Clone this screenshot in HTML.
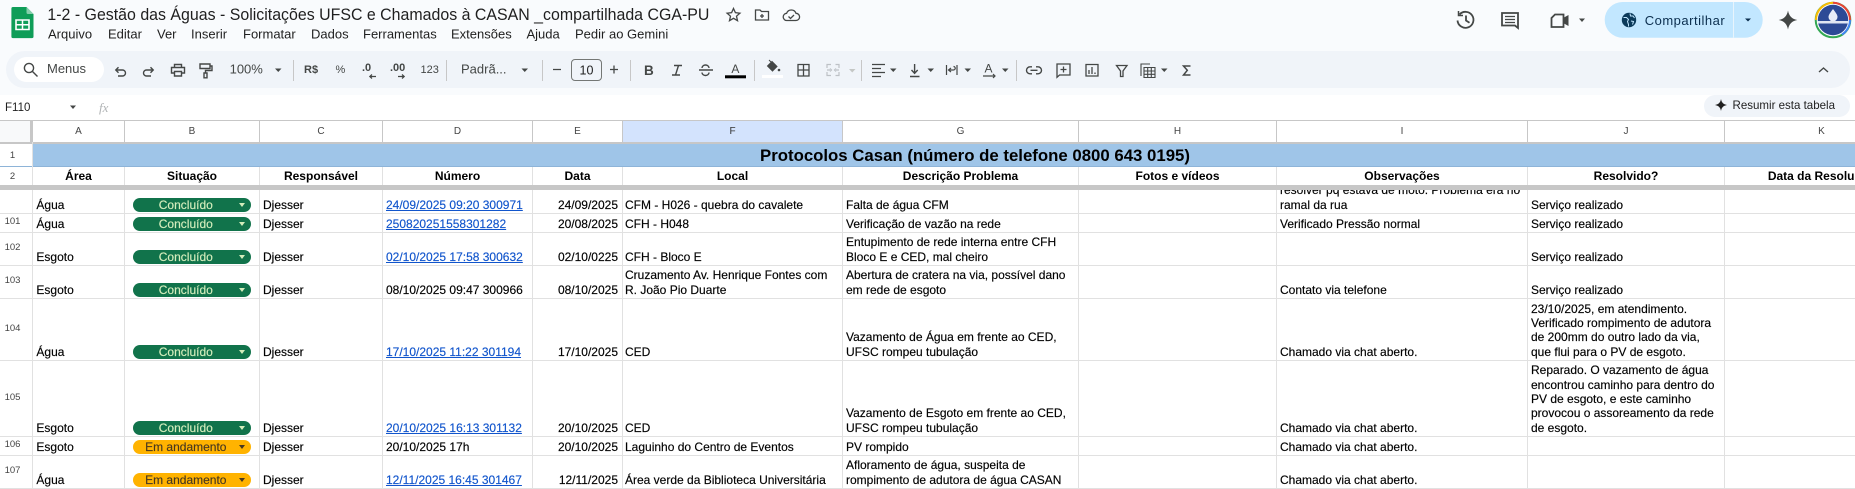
<!DOCTYPE html>
<html lang="pt-BR">
<head>
<meta charset="utf-8">
<title>1-2 - Gestão das Águas</title>
<style>
html,body{margin:0;padding:0;width:1855px;height:489px;overflow:hidden;background:#fff;font-family:"Liberation Sans",Arial,sans-serif;color:#000}
#top{position:absolute;left:0;top:0;width:1855px;height:95px;background:#f9fbfd}
#tb{position:absolute;left:6px;top:51px;width:1844px;height:37px;background:#f0f4f9;border-radius:18.5px}
#sv{position:absolute;left:0;top:0;z-index:5}
.abs{position:absolute}
.cl{position:absolute;top:120px;height:22px;width:1px;background:#c7c7c7}
.gl{position:absolute;top:142px;height:347px;width:1px;background:#e1e1e1}
.hl{position:absolute;left:0;width:1855px;height:1px;background:#e1e1e1}
.ch{position:absolute;top:120px;height:22px;line-height:23px;text-align:center;font-size:10px;color:#444}
#g{position:absolute;left:0;top:0;width:1855px;height:489px;clip-path:inset(190px 0 0 0);font-size:12px;line-height:14.33px;-webkit-text-stroke:.15px currentColor}
.r{position:absolute;left:0;width:1855px}
.n{position:absolute;left:0;top:0;bottom:0;width:25px;display:flex;align-items:center;justify-content:center;font-size:9.5px;color:#444;-webkit-text-stroke:0}
.t{position:absolute;bottom:1px;white-space:nowrap}
.a{left:36.4px}.c{left:263px}.d{left:386px}.e{left:530px;width:88px;text-align:right}.f{left:625px}.k{left:846px}.i{left:1280px}.j{left:1531px}
.u{color:#1155cc;text-decoration:underline}
.p{position:absolute;left:133px;width:118.4px;bottom:1px;height:14.33px;border-radius:7.2px;background:#11734b;color:#d4edbc;line-height:14.33px}
.p span{position:absolute;left:0;width:105.6px;text-align:center}
.p i{position:absolute;left:106px;top:5px;width:0;height:0;border-left:3.6px solid transparent;border-right:3.6px solid transparent;border-top:4px solid #d4edbc}
.p.y{background:#ffb300;color:#473821}
.p.y i{border-top-color:#473821}
.h2{position:absolute;top:167px;height:18px;line-height:19px;font-size:12px;font-weight:bold;text-align:center;white-space:nowrap}
</style>
</head>
<body>
<div id="top"></div>
<div id="tb"></div>
<div class="abs" style="left:14px;top:57px;width:89.5px;height:25px;background:#fff;border-radius:12.5px"></div>
<div class="abs" style="left:1704px;top:95px;width:146px;height:22px;background:#f0f4f9;border-radius:11px"></div>
<div class="abs" style="left:0;top:120px;width:1855px;height:1px;background:#c7c7c7"></div>

<!-- column header -->
<div class="abs" style="left:0;top:121px;width:30px;height:21px;background:#f8f9fa"></div>
<div class="abs" style="left:29.5px;top:120px;width:3px;height:24px;background:#c7c7c7"></div>
<div class="abs" style="left:623px;top:121px;width:219px;height:21px;background:#d3e3fd"></div>
<div class="abs" style="left:0;top:142px;width:1855px;height:2px;background:#c7c7c7"></div>
<div class="cl" style="left:124px"></div><div class="cl" style="left:259px"></div><div class="cl" style="left:382px"></div><div class="cl" style="left:532px"></div><div class="cl" style="left:622px"></div><div class="cl" style="left:842px"></div><div class="cl" style="left:1078px"></div><div class="cl" style="left:1276px"></div><div class="cl" style="left:1527px"></div><div class="cl" style="left:1724px"></div>
<div class="ch" style="left:33px;width:91px">A</div><div class="ch" style="left:125px;width:134px">B</div><div class="ch" style="left:260px;width:122px">C</div><div class="ch" style="left:383px;width:149px">D</div><div class="ch" style="left:533px;width:89px">E</div><div class="ch" style="left:623px;width:219px;color:#333">F</div><div class="ch" style="left:843px;width:235px">G</div><div class="ch" style="left:1079px;width:197px">H</div><div class="ch" style="left:1277px;width:250px">I</div><div class="ch" style="left:1528px;width:196px">J</div><div class="ch" style="left:1725px;width:193px">K</div>

<!-- row 1 -->
<div class="abs" style="left:33px;top:144px;width:1822px;height:22px;background:#9fc5e8"></div>
<div class="abs" style="left:0;top:166px;width:1855px;height:1px;background:#8eb4d8"></div>
<div class="abs" style="left:760px;top:144px;height:22px;line-height:23px;font-size:16.8px;font-weight:bold;white-space:nowrap">Protocolos Casan (número de telefone 0800 643 0195)</div>
<div class="abs" style="left:0;top:144px;width:25px;height:22px;line-height:23px;text-align:center;font-size:9.5px;color:#444">1</div>

<!-- vertical grid -->
<div class="gl" style="left:32px"></div>
<div class="abs" style="left:124px;top:167px;width:1px;height:322px;background:#e1e1e1"></div><div class="abs" style="left:259px;top:167px;width:1px;height:322px;background:#e1e1e1"></div><div class="abs" style="left:382px;top:167px;width:1px;height:322px;background:#e1e1e1"></div><div class="abs" style="left:532px;top:167px;width:1px;height:322px;background:#e1e1e1"></div><div class="abs" style="left:622px;top:167px;width:1px;height:322px;background:#e1e1e1"></div><div class="abs" style="left:842px;top:167px;width:1px;height:322px;background:#e1e1e1"></div><div class="abs" style="left:1078px;top:167px;width:1px;height:322px;background:#e1e1e1"></div><div class="abs" style="left:1276px;top:167px;width:1px;height:322px;background:#e1e1e1"></div><div class="abs" style="left:1527px;top:167px;width:1px;height:322px;background:#e1e1e1"></div><div class="abs" style="left:1724px;top:167px;width:1px;height:322px;background:#e1e1e1"></div>

<!-- row 2 -->
<div class="abs" style="left:0;top:167px;width:25px;height:18px;line-height:19px;text-align:center;font-size:9.5px;color:#444">2</div>
<div class="h2" style="left:33px;width:91px">Área</div>
<div class="h2" style="left:125px;width:134px">Situação</div>
<div class="h2" style="left:260px;width:122px">Responsável</div>
<div class="h2" style="left:383px;width:149px">Número</div>
<div class="h2" style="left:533px;width:89px">Data</div>
<div class="h2" style="left:623px;width:219px">Local</div>
<div class="h2" style="left:843px;width:235px">Descrição Problema</div>
<div class="h2" style="left:1079px;width:197px">Fotos e vídeos</div>
<div class="h2" style="left:1277px;width:250px">Observações</div>
<div class="h2" style="left:1528px;width:196px">Resolvido?</div>
<div class="h2" style="left:1725px;width:193px">Data da Resolução</div>
<div class="abs" style="left:0;top:185px;width:1855px;height:5px;background:#c7c7c7"></div>

<!-- horizontal lines -->
<div class="hl" style="top:213px"></div><div class="hl" style="top:232px"></div><div class="hl" style="top:265px"></div><div class="hl" style="top:298px"></div><div class="hl" style="top:360px"></div><div class="hl" style="top:436px"></div><div class="hl" style="top:455px"></div><div class="hl" style="top:488px"></div>

<div id="g">
<div class="r" style="top:163px;height:50px"><div class="n">100</div>
 <div class="t a">Água</div><div class="p"><span>Concluído</span><i></i></div><div class="t c">Djesser</div><div class="t d u">24/09/2025 09:20 300971</div><div class="t e">24/09/2025</div><div class="t f">CFM - H026 - quebra do cavalete</div><div class="t k">Falta de água CFM</div><div class="t i">resolver pq estava de moto. Problema era no<br>ramal da rua</div><div class="t j">Serviço realizado</div></div>
<div class="r" style="top:213px;height:19px"><div class="n">101</div>
 <div class="t a">Água</div><div class="p"><span>Concluído</span><i></i></div><div class="t c">Djesser</div><div class="t d u">250820251558301282</div><div class="t e">20/08/2025</div><div class="t f">CFH - H048</div><div class="t k">Verificação de vazão na rede</div><div class="t i">Verificado Pressão normal</div><div class="t j">Serviço realizado</div></div>
<div class="r" style="top:232px;height:33px"><div class="n">102</div>
 <div class="t a">Esgoto</div><div class="p"><span>Concluído</span><i></i></div><div class="t c">Djesser</div><div class="t d u">02/10/2025 17:58 300632</div><div class="t e">02/10/0225</div><div class="t f">CFH - Bloco E</div><div class="t k">Entupimento de rede interna entre CFH<br>Bloco E e CED, mal cheiro</div><div class="t j">Serviço realizado</div></div>
<div class="r" style="top:265px;height:33px"><div class="n">103</div>
 <div class="t a">Esgoto</div><div class="p"><span>Concluído</span><i></i></div><div class="t c">Djesser</div><div class="t d">08/10/2025 09:47 300966</div><div class="t e">08/10/2025</div><div class="t f">Cruzamento Av. Henrique Fontes com<br>R. João Pio Duarte</div><div class="t k">Abertura de cratera na via, possível dano<br>em rede de esgoto</div><div class="t i">Contato via telefone</div><div class="t j">Serviço realizado</div></div>
<div class="r" style="top:298px;height:62px"><div class="n">104</div>
 <div class="t a">Água</div><div class="p"><span>Concluído</span><i></i></div><div class="t c">Djesser</div><div class="t d u">17/10/2025 11:22 301194</div><div class="t e">17/10/2025</div><div class="t f">CED</div><div class="t k">Vazamento de Água em frente ao CED,<br>UFSC rompeu tubulação</div><div class="t i">Chamado via chat aberto.</div><div class="t j">23/10/2025, em atendimento.<br>Verificado rompimento de adutora<br>de 200mm do outro lado da via,<br>que flui para o PV de esgoto.</div></div>
<div class="r" style="top:360px;height:76px"><div class="n">105</div>
 <div class="t a">Esgoto</div><div class="p"><span>Concluído</span><i></i></div><div class="t c">Djesser</div><div class="t d u">20/10/2025 16:13 301132</div><div class="t e">20/10/2025</div><div class="t f">CED</div><div class="t k">Vazamento de Esgoto em frente ao CED,<br>UFSC rompeu tubulação</div><div class="t i">Chamado via chat aberto.</div><div class="t j">Reparado. O vazamento de água<br>encontrou caminho para dentro do<br>PV de esgoto, e este caminho<br>provocou o assoreamento da rede<br>de esgoto.</div></div>
<div class="r" style="top:436px;height:19px"><div class="n">106</div>
 <div class="t a">Esgoto</div><div class="p y"><span>Em andamento</span><i></i></div><div class="t c">Djesser</div><div class="t d">20/10/2025 17h</div><div class="t e">20/10/2025</div><div class="t f">Laguinho do Centro de Eventos</div><div class="t k">PV rompido</div><div class="t i">Chamado via chat aberto.</div></div>
<div class="r" style="top:455px;height:33px"><div class="n">107</div>
 <div class="t a">Água</div><div class="p y"><span>Em andamento</span><i></i></div><div class="t c">Djesser</div><div class="t d u">12/11/2025 16:45 301467</div><div class="t e">12/11/2025</div><div class="t f">Área verde da Biblioteca Universitária</div><div class="t k">Afloramento de água, suspeita de<br>rompimento de adutora de água CASAN</div><div class="t i">Chamado via chat aberto.</div></div>
</div>

<svg id="sv" width="1855" height="120" viewBox="0 0 1855 120" xmlns="http://www.w3.org/2000/svg" font-family="'Liberation Sans',Arial,sans-serif">
 <!-- sheets logo -->
 <path d="M13 7h13.5l7 7v22.5a1.6 1.6 0 0 1-1.6 1.6H13a1.6 1.6 0 0 1-1.6-1.6V8.6A1.6 1.6 0 0 1 13 7z" fill="#0f9d58"/>
 <path d="M26.5 7l7 7h-5.5a1.5 1.5 0 0 1-1.5-1.5z" fill="#87ceac"/>
 <path d="M16 20h13v9.5H16z" fill="none" stroke="#fff" stroke-width="1.6"/>
 <path d="M22.5 20v9.5M16 24.7h13" stroke="#fff" stroke-width="1.5"/>
 <!-- title -->
 <text x="47.4" y="20" font-size="16.5" fill="#1f1f1f" textLength="662" lengthAdjust="spacingAndGlyphs">1-2 - Gestão das Águas - Solicitações UFSC e Chamados à CASAN _compartilhada CGA-PU</text>
 <g fill="none" stroke="#444746" stroke-width="1.3">
  <path d="M733.5 8.5l1.9 4.2 4.5.5-3.4 3 1 4.5-4-2.4-4 2.4 1-4.5-3.4-3 4.5-.5z"/>
  <path d="M755.5 10h4.5l1.5 1.5h7v8.5h-13z"/><path d="M762 14v4M760 16h4"/>
  <path d="M787 20.500a3.600 3.600 0 0 1-.4-7.200 5 5 0 0 1 9.400 0 3.600 3.600 0 0 1 0 7.200z"/><path d="M788.500 16.500l2 2 3.500-3.500"/>
 </g>
 <!-- menu -->
 <g font-size="13" fill="#1f1f1f">
  <text x="48" y="38.500">Arquivo</text><text x="108" y="38.500">Editar</text><text x="157" y="38.500">Ver</text><text x="191" y="38.500">Inserir</text><text x="243" y="38.500">Formatar</text><text x="311" y="38.500">Dados</text><text x="363" y="38.500">Ferramentas</text><text x="451" y="38.500">Extensões</text><text x="526.500" y="38.500">Ajuda</text><text x="575" y="38.500">Pedir ao Gemini</text>
 </g>
 <!-- right top -->
 <g fill="none" stroke="#444746" stroke-width="1.800">
  <path d="M1459.500 14.500a8 8 0 1 1-2 6"/><path d="M1458.500 11v4.500h4.500" stroke-width="1.500"/><path d="M1466 15.500v5l3.500 2.200"/>
  <path d="M1502 13h16v13.500l0 1.500-3-2.500h-13z"/><path d="M1505 16.500h10M1505 19.500h10M1505 22.500h10" stroke-width="1.300"/>
  <path d="M1555 14.500h8.500v12.500h-12v-9z"/>
 </g>
 <path d="M1564 17.500l4.500-2.500v11l-4.500-2.500z" fill="#444746"/>
 <path d="M1579 18.500h6l-3 3.500z" fill="#444746"/>
 <rect x="1604.700" y="2" width="158" height="35.700" rx="17.800" fill="#c2e7ff"/>
 <rect x="1733" y="2" width="1" height="35.700" fill="#e8f4fc"/>
 <circle cx="1629" cy="20" r="7.200" fill="#0b3a5a"/>
 <path d="M1623.500 17.500l3 0 2 2-1 2 1 3v2M1630 13.500l.500 2.500 2.500 0 1.500 2M1631 21l2.500.500-1 3" fill="none" stroke="#c2e7ff" stroke-width="1"/>
 <text x="1644.700" y="25" font-size="13" fill="#0b2e4e" textLength="80" lengthAdjust="spacing">Compartilhar</text>
 <path d="M1745 18.500h6l-3 3z" fill="#0b2e4e"/>
 <path d="M1788 10.500c1 5.500 3.800 8.400 9.300 9.500-5.500 1.100-8.300 4-9.300 9.500-1-5.500-3.800-8.400-9.300-9.500 5.500-1.100 8.300-4 9.300-9.500z" fill="#444746"/>
 <!-- avatar -->
 <circle cx="1833" cy="20" r="17.300" fill="none" stroke="#34a853" stroke-width="2"/>
 <path d="M1816 20a17.300 17.300 0 0 1 17-17.300" fill="none" stroke="#fbbc04" stroke-width="2"/>
 <path d="M1833 2.700a17.300 17.300 0 0 1 17 17.300" fill="none" stroke="#ea4335" stroke-width="2"/>
 <path d="M1850 20a17.300 17.300 0 0 1-8 14.500" fill="none" stroke="#4285f4" stroke-width="2"/>
 <circle cx="1833" cy="20" r="15.200" fill="#2c4a96"/>
 <path d="M1818 21h30v2.500h-30z" fill="#dfe5f2"/>
 <path d="M1833 9c3 4 4.500 6 4.500 8a4.500 4.500 0 0 1-9 0c0-2 1.500-4 4.500-8z" fill="#e8edf8"/>
 <!-- toolbar -->
 <g fill="none" stroke="#444746" stroke-width="1.400">
  <circle cx="29" cy="68" r="4.600"/><path d="M32.500 71.500l5 5"/>
  <path d="M116 70h6.500a3 3 0 0 1 0 6H118"/><path d="M118.500 67.300L115.800 70l2.700 2.700"/>
  <path d="M153 70h-6.500a3 3 0 0 0 0 6h4.500"/><path d="M150.500 67.300l2.700 2.700-2.700 2.700"/>
  <path d="M174.500 67.500V64.500h7v3M174.500 73h-3v-5.500h13V73h-3M174.500 71.500h7v4.500h-7z"/>
  <path d="M200 64h10v4.500h-10zM210 66h2v4.500h-6.500V73"/><path d="M204 73h3v4.800h-3z"/>
 </g>
 <g font-size="13" fill="#444746"><text x="47" y="73">Menus</text><text x="229.600" y="73.500">100%</text><text x="461" y="73.500">Padrã...</text></g>
 <g font-size="11" fill="#444746" font-weight="bold">
  <text x="304" y="73">R$</text>
 </g>
 <g font-size="11" fill="#444746">
  <text x="335.500" y="73">%</text>
  <text x="362" y="71" font-weight="bold">.0</text>
  <text x="390" y="71" font-weight="bold">.00</text>
  <text x="420.500" y="73">123</text>
 </g>
 <path d="M376 76.500h-6M372 74.500l-2.200 2 2.200 2M398 76.500h6M402 74.500l2.200 2-2.200 2" fill="none" stroke="#444746" stroke-width="1.200"/>
 <g fill="#444746">
  <path d="M275 68.500h6.500l-3.250 3.500zM521.500 68.500h6.500l-3.250 3.500zM70 105.500h6l-3 3.500zM890 68.500h6.500l-3.250 3.500zM927.500 68.500h6.500l-3.250 3.500zM964.500 68.500h6.500l-3.250 3.500zM1002 68.500h6.500l-3.250 3.500zM1161 68.500h6.500l-3.250 3.500z"/>
 </g>
 <path d="M849 69h6.500l-3.250 3.500z" fill="#c4c7c5"/>
 <g fill="#c7c7c7">
  <rect x="293" y="60" width="1" height="21"/><rect x="446" y="60" width="1" height="21"/><rect x="542" y="60" width="1" height="21"/><rect x="630" y="60" width="1" height="21"/><rect x="754" y="60" width="1" height="21"/><rect x="861" y="60" width="1" height="21"/><rect x="1016" y="60" width="1" height="21"/>
 </g>
 <path d="M553 69.500h8M610 69.500h8M614 65.500v8" stroke="#444746" stroke-width="1.300" fill="none"/>
 <rect x="571.500" y="59.500" width="30" height="21" rx="3.500" fill="none" stroke="#747775" stroke-width="1"/>
 <text x="586.500" y="74.500" font-size="12.500" fill="#1f1f1f" text-anchor="middle">10</text>
 <text x="644" y="75" font-size="13.500" font-weight="bold" fill="#444746">B</text>
 <path d="M674 65.500h8M672 75h8M678.500 65.500l-3 9.500M699 70h14M702 68a3.500 3 0 0 1 7 0M702 72.500a3.500 3 0 0 0 7 0" fill="none" stroke="#444746" stroke-width="1.400"/>
 <text x="735.400" y="73" font-size="12" fill="#444746" text-anchor="middle">A</text>
 <rect x="725" y="75.300" width="21" height="3" fill="#000"/>
 <path d="M767.500 66l4.500-4.500 5 5-4.500 4.500zM769 60l3.500 3.500" fill="#444746" stroke="#444746" stroke-width="1"/>
 <circle cx="779" cy="70" r="1.300" fill="#444746"/>
 <rect x="762" y="75" width="21" height="3" fill="#fff"/>
 <path d="M798 64.500h11v11.500h-11zM803.500 64.500v11.500M798 70h11" fill="none" stroke="#444746" stroke-width="1.300"/>
 <path d="M827 68v-3.500h4M835.500 64.500h3.500V68M827 72v3.500h4M835.500 75.500h3.500V72M827 70h3M830 68.500l1.500 1.500-1.500 1.500M839 70h-3M836 68.500l-1.500 1.500 1.500 1.500" fill="none" stroke="#bdc1c6" stroke-width="1.200"/>
 <path d="M872 64.500h13M872 68.500h9M872 72.500h13M872 76.500h9" stroke="#444746" stroke-width="1.300"/>
 <path d="M914.600 64v9M911.500 70l3.100 3.300 3.100-3.300M910 76.500h9.500" fill="none" stroke="#444746" stroke-width="1.400"/>
 <path d="M946.500 65v10M957 65v10M949 70h4.500a1.500 1.500 0 0 0 0-3.500M951 68l-2.500 2 2.500 2" fill="none" stroke="#444746" stroke-width="1.200"/>
 <text x="988.500" y="72.500" font-size="12" fill="#444746" text-anchor="middle">A</text>
 <path d="M983 76h12M993 74l2 2-2 2" fill="none" stroke="#444746" stroke-width="1.200"/>
 <path d="M1032 66.800h-2a3.500 3.500 0 0 0 0 7h2M1036 66.800h2a3.500 3.500 0 0 1 0 7h-2M1030.500 70.300h7" fill="none" stroke="#444746" stroke-width="1.400"/>
 <path d="M1057 64h13v11h-10.500l-2.500 2.300zM1063.500 66.500v6M1060.500 69.500h6" fill="none" stroke="#444746" stroke-width="1.300"/>
 <path d="M1086 64.500h12v11.500h-12z" fill="none" stroke="#444746" stroke-width="1.300"/>
 <path d="M1089 70v4M1092 67v7M1095 72.500v1.500" stroke="#444746" stroke-width="1.300"/>
 <path d="M1116.500 65.500h10.500l-4 5.500v5.500h-2.500V71z" fill="none" stroke="#444746" stroke-width="1.300"/>
 <path d="M1141 76V64h9M1144 67.500h11v10h-11zM1144 71h11M1144 74.300h11M1147.700 67.500v10M1151.300 67.500v10" fill="none" stroke="#444746" stroke-width="1.100"/>
 <path d="M1190.500 66h-7l3.800 4.300-3.800 4.700h7" fill="none" stroke="#444746" stroke-width="1.500"/>
 <path d="M1819 72l4.500-4 4.500 4" fill="none" stroke="#444746" stroke-width="1.400"/>
 <!-- formula bar -->
 <text x="5" y="111" font-size="11.500" fill="#1f1f1f">F110</text>
 <text x="99" y="112" font-size="13" font-family="'Liberation Serif',serif" font-style="italic" fill="#b0b3b5">fx</text>
 <path d="M1721 99c.6 3.500 2.300 5.300 6 6-3.700.7-5.400 2.500-6 6-.6-3.500-2.300-5.300-6-6 3.700-.7 5.400-2.500 6-6z" fill="#1f1f1f"/>
 <text x="1732.500" y="109" font-size="12" fill="#1f1f1f" textLength="102.500" lengthAdjust="spacingAndGlyphs">Resumir esta tabela</text>
</svg>
</body>
</html>
